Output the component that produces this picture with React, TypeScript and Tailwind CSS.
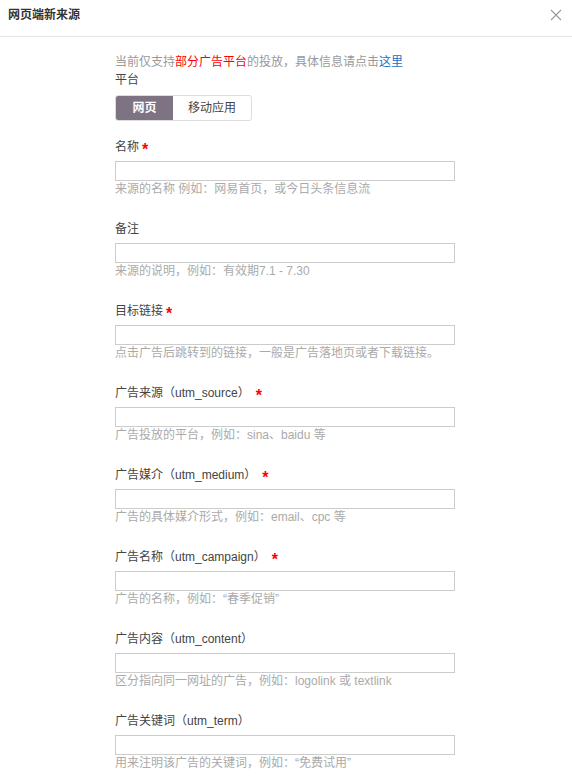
import React from "react"

const fields = [
  { label: "名称", required: true, spaced: false, hint: "来源的名称 例如：网易首页，或今日头条信息流" },
  { label: "备注", required: false, spaced: false, hint: "来源的说明，例如：有效期7.1 - 7.30" },
  { label: "目标链接", required: true, spaced: false, hint: "点击广告后跳转到的链接，一般是广告落地页或者下载链接。" },
  { label: "广告来源（utm_source）", required: true, spaced: true, hint: "广告投放的平台，例如：sina、baidu 等" },
  { label: "广告媒介（utm_medium）", required: true, spaced: true, hint: "广告的具体媒介形式，例如：email、cpc 等" },
  { label: "广告名称（utm_campaign）", required: true, spaced: true, hint: "广告的名称，例如：“春季促销”" },
  { label: "广告内容（utm_content）", required: false, spaced: false, hint: "区分指向同一网址的广告，例如：logolink 或 textlink" },
  { label: "广告关键词（utm_term）", required: false, spaced: false, hint: "用来注明该广告的关键词，例如：“免费试用”" },
]

function Field({ label, required, spaced, hint }: { label: string; required: boolean; spaced: boolean; hint: string }) {
  return (
    <div className="mb-[23px]">
      <div className="h-[18px] leading-[18px] text-[12px] text-[#444] flex items-center">
        <span>{label}</span>
        {required && (
          <span className={`text-[#f00] text-[16px] font-bold leading-none pt-[5px] ${spaced ? "ml-[6px]" : "ml-[3px]"}`}>*</span>
        )}
      </div>
      <input className="mt-[5px] block w-[340px] h-[20px] border border-[#ccc] bg-white outline-none" />
      <div className="h-[16px] leading-[16px] text-[12px] text-[#aaa]">{hint}</div>
    </div>
  )
}

export default function App() {
  return (
    <div
      className="w-[572px] h-[782px] bg-white overflow-hidden"
      style={{ fontFamily: '"Liberation Sans", "Noto Sans CJK SC", sans-serif' }}
    >
      {/* header */}
      <div className="h-[37px] border-b border-[#e6e6e6] flex justify-between pl-[8px] pr-[10px] pt-[7px]">
        <span className="text-[12px] font-bold text-[#333] leading-[16px]">网页端新来源</span>
        <svg width="12" height="12" viewBox="0 0 12 12" className="mt-[2px]">
          <path d="M1 1L11 11M11 1L1 11" stroke="#9a9a9a" strokeWidth="1.1" />
        </svg>
      </div>

      <div className="pl-[115px] pt-[16px]">
        <div className="h-[18px] leading-[18px] text-[12px] text-[#999]">
          当前仅支持<span className="text-[#f00]">部分广告平台</span>的投放，具体信息请点击
          <span className="text-[#1a6fc4]">这里</span>
        </div>
        <div className="h-[18px] leading-[18px] text-[12px] text-[#444]">平台</div>

        <div className="mt-[6px] flex w-[137px] h-[26px] rounded-[3px] border border-[#ddd] overflow-hidden text-[12px]">
          <div className="w-[57px] bg-[#7d7383] text-white font-bold flex items-center justify-center">网页</div>
          <div className="flex-1 text-[#444] flex items-center justify-center">移动应用</div>
        </div>

        <div className="mt-[17px]">
          {fields.map((f) => (
            <Field key={f.label} {...f} />
          ))}
        </div>
      </div>
    </div>
  )
}
